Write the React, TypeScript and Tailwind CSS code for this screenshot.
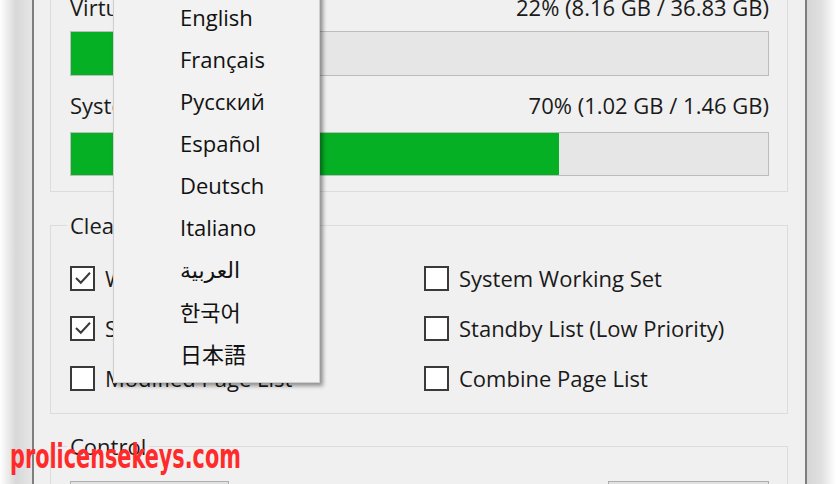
import React from "react";

const languages = [
  "English",
  "Français",
  "Русский",
  "Español",
  "Deutsch",
  "Italiano",
  "العربية",
  "한국어",
  "日本語"
];

const leftOptions = [
  { label: "Working Set", checked: true },
  { label: "System File Cache", checked: true },
  { label: "Modified Page List", checked: false }
];

const rightOptions = [
  { label: "System Working Set", checked: false },
  { label: "Standby List (Low Priority)", checked: false },
  { label: "Combine Page List", checked: false }
];

function CheckBox({ checked }: { checked?: boolean }) {
  return (
    <span className="flex h-[25px] w-[25px] shrink-0 items-center justify-center border-2 border-[#3a3a3a] bg-white">
      {checked && (
        <svg viewBox="0 0 20 20" className="h-[20px] w-[20px]">
          <path d="M3 10 L7.8 14.8 L17 4.8" fill="none" stroke="#3a3a3a" strokeWidth="2" />
        </svg>
      )}
    </span>
  );
}

function Option({ label, checked }: { label: string; checked?: boolean }) {
  return (
    <div className="flex h-[50px] items-center gap-[10px]">
      <CheckBox checked={checked} />
      <span className="whitespace-nowrap">{label}</span>
    </div>
  );
}

function UsageRow({ name, value }: { name: string; value: string }) {
  return (
    <div className="flex h-[28px] items-center justify-between">
      <span>{name}</span>
      <span>{value}</span>
    </div>
  );
}

function UsageBar({ percent, tall }: { percent: number; tall?: boolean }) {
  return (
    <div className={`border border-[#bcbcbc] bg-[#e6e6e6] ${tall ? "h-[45px]" : "h-[44px]"}`}>
      <div className="h-full bg-[#06b025]" style={{ width: `${percent}%` }} />
    </div>
  );
}

export default function App() {
  return (
    <div className="relative flex h-[484px] w-[836px] overflow-hidden bg-white font-['Open_Sans','Noto_Sans',sans-serif] text-[22px] text-[#1a1a1a]">
      {/* shadow left of the window */}
      <div className="w-[32px] shrink-0 bg-gradient-to-r from-white via-[#d8d8d8] to-[#e6e6e6]" />

      {/* window */}
      <div className="flex min-w-0 flex-1 flex-col border-x-2 border-x-[#7e7e7e] bg-[#f0f0f0] pl-[16px] pr-[17px]">
        {/* memory group (top cut off) */}
        <div className="-mt-[21px] border border-[#dcdcdc] pb-[15px] pl-[19px] pr-[18px] pt-[13px]">
          <UsageRow name="Virtual memory" value="22% (8.16 GB / 36.83 GB)" />
          <div className="mt-[10px]">
            <UsageBar percent={22} tall />
          </div>
          <div className="mt-[15px]">
            <UsageRow name="System cache" value="70% (1.02 GB / 1.46 GB)" />
          </div>
          <div className="mt-[13px]">
            <UsageBar percent={70} />
          </div>
        </div>

        {/* cleaning area */}
        <fieldset className="mt-[19px] border border-[#dcdcdc] pb-[10px] pl-[19px] pr-[18px] pt-[14px]">
          <legend className="-ml-[3px] h-[28px] px-[3px] leading-[28px]">Cleaning area</legend>
          <div className="grid grid-cols-[354px_1fr]">
            <div className="flex flex-col">
              {leftOptions.map((o) => (
                <Option key={o.label} label={o.label} checked={o.checked} />
              ))}
            </div>
            <div className="flex flex-col">
              {rightOptions.map((o) => (
                <Option key={o.label} label={o.label} checked={o.checked} />
              ))}
            </div>
          </div>
        </fieldset>

        {/* control */}
        <fieldset className="mt-[18px] border border-[#dcdcdc] pl-[19px] pr-[18px] pt-[21px]">
          <legend className="-ml-[3px] h-[28px] px-[3px] leading-[28px]">Control</legend>
          <div className="flex justify-between">
            <button type="button" className="h-[40px] w-[159px] border border-[#adadad] bg-[#e1e1e1]">
              Clean memory
            </button>
            <button type="button" className="h-[40px] w-[161px] border border-[#adadad] bg-[#e1e1e1]">
              Close
            </button>
          </div>
        </fieldset>
      </div>

      {/* shadow right of the window */}
      <div className="w-[29px] shrink-0 bg-gradient-to-r from-[#d6d6d6] via-[#e0e0e0] to-white" />

      {/* language menu */}
      <div className="absolute left-[113px] top-[-11px] w-[207px] border border-[#cfcfcf] bg-[#f2f2f2] pb-[8px] pt-[6px] shadow-[3px_3px_4px_rgba(0,0,0,0.4)]">
        {languages.map((lang) => (
          <div
            key={lang}
            className="flex h-[42px] items-center pl-[66px] font-['Open_Sans','DejaVu_Sans',sans-serif] text-[22px] text-[#111]"
          >
            {lang === "日本語" ? (
              <span className="font-['Noto_Sans_CJK_JP',sans-serif]">{lang}</span>
            ) : lang === "한국어" ? (
              <span className="font-['Noto_Sans_CJK_KR',sans-serif]">{lang}</span>
            ) : (
              lang
            )}
          </div>
        ))}
      </div>

      {/* watermark */}
      <div className="absolute left-[10px] top-[439px] origin-left scale-x-[0.68] whitespace-nowrap font-['DejaVu_Sans_Condensed','DejaVu_Sans',sans-serif] text-[34px] font-bold leading-none text-[#ff2a2a]">
        prolicensekeys.com
      </div>
    </div>
  );
}
